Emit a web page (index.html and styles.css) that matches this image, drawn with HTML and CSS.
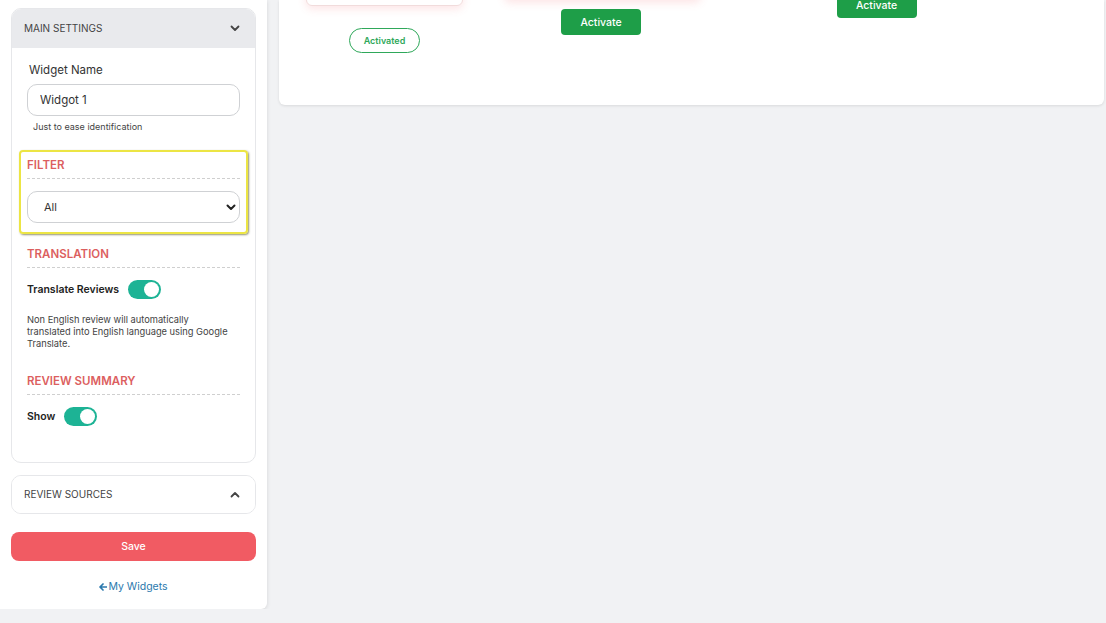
FILE: index.html
```html
<!DOCTYPE html>
<html lang="en">
<head>
    <meta charset="UTF-8">
    <meta name="viewport" content="width=device-width, initial-scale=1.0">
    <title>Widget Editor</title>
    <link rel="stylesheet" href="styles.css">
</head>
<body>
    <div class="layout">
        <aside class="sidebar">
            <div class="panel">
                <div class="panel-head">
                    <span>MAIN SETTINGS</span>
                    <svg class="chev" width="10" height="7" viewBox="0 0 10 7"><path d="M1.5 1.5 L5 5 L8.5 1.5" fill="none" stroke="#444" stroke-width="1.8" stroke-linecap="round" stroke-linejoin="round"/></svg>
                </div>
                <div class="panel-body">
                    <div class="form-group">
                        <label for="widget_name">Widget Name</label>
                        <input type="text" id="widget_name" value="Widgot 1">
                        <div class="hint">Just to ease identification</div>
                    </div>

                    <div class="section highlight">
                        <div class="section-title">FILTER</div>
                        <div class="select-box">
                            <span>All</span>
                            <svg width="10" height="7" viewBox="0 0 10 7"><path d="M1.5 1.5 L5 5 L8.5 1.5" fill="none" stroke="#222" stroke-width="2" stroke-linecap="round" stroke-linejoin="round"/></svg>
                        </div>
                    </div>

                    <div class="section">
                        <div class="section-title">TRANSLATION</div>
                        <div class="switch-row">
                            <span>Translate Reviews</span>
                            <span class="switch"></span>
                        </div>
                        <p class="note">Non English review will automatically translated into English language using Google Translate.</p>
                    </div>

                    <div class="section">
                        <div class="section-title">REVIEW SUMMARY</div>
                        <div class="switch-row">
                            <span>Show</span>
                            <span class="switch"></span>
                        </div>
                    </div>
                </div>
            </div>

            <div class="panel closed">
                <div class="panel-head">
                    <span>REVIEW SOURCES</span>
                    <svg class="chev" width="10" height="7" viewBox="0 0 10 7"><path d="M1.5 5.5 L5 2 L8.5 5.5" fill="none" stroke="#444" stroke-width="1.8" stroke-linecap="round" stroke-linejoin="round"/></svg>
                </div>
            </div>

            <button class="save">Save</button>
            <a class="back" href="#"><svg width="8" height="8" viewBox="0 0 8 8"><path d="M4 1 L1 4 L4 7 M1.3 4 H7.5" fill="none" stroke="#2c79ad" stroke-width="1.7" stroke-linecap="round" stroke-linejoin="round"/></svg>My Widgets</a>
        </aside>

        <main class="content">
            <div class="templates">
                <div class="template t1">
                    <div class="preview"></div>
                    <span class="activated">Activated</span>
                </div>
                <div class="template t2">
                    <div class="preview"></div>
                    <button class="activate">Activate</button>
                </div>
                <div class="template t3">
                    <div class="preview plain"></div>
                    <button class="activate">Activate</button>
                </div>
            </div>
        </main>
    </div>
</body>
</html>
```

FILE: styles.css
```css
body {
    margin: 0;
    font-family: 'Inter', 'Noto Sans', sans-serif;
    background-color: #f1f2f4;
    color: #222;
}
.layout {
    display: flex;
    align-items: flex-start;
    gap: 12px;
}
.sidebar {
    width: 267px;
    box-sizing: border-box;
    background-color: white;
    padding: 8px 11px 16px;
    border-radius: 0 0 6px 0;
    box-shadow: 0 1px 4px rgba(0, 0, 0, 0.12);
}
.panel {
    border: 1px solid #e6e7ea;
    border-radius: 10px;
    overflow: hidden;
}
.panel-head {
    display: flex;
    align-items: center;
    justify-content: space-between;
    height: 39px;
    padding: 0 13px 1px 12px;
    box-sizing: border-box;
    background-color: #e9eaed;
    font-size: 10px;
    color: #444;
}
.panel.closed {
    margin-top: 12px;
}
.panel.closed .panel-head {
    background-color: white;
    height: 37px;
}
.chev {
    margin-right: 2px;
}
.panel-body {
    padding: 14px 15px 36px;
}
.form-group label {
    display: block;
    font-size: 11.5px;
    color: #333;
    margin: 1px 0 7px 2px;
}
.form-group input {
    width: 100%;
    box-sizing: border-box;
    height: 32px;
    padding: 0 12px;
    border: 1px solid #cfd1d4;
    border-radius: 10px;
    font-family: inherit;
    font-size: 11.5px;
    color: #333;
}
.hint {
    font-size: 9px;
    color: #444;
    margin: 5px 0 0 6px;
}
.section {
    margin-top: 13px;
}
.section.highlight {
    margin: 18px -8px 0;
    padding: 6px 6px 9px;
    border: 2px solid #ece544;
    border-radius: 4px;
    box-shadow: 1px 1px 2px rgba(60, 60, 0, 0.55);
}
.section-title {
    font-size: 11.5px;
    font-weight: 600;
    color: #dc5f5f;
    padding-bottom: 6px;
    border-bottom: 1px dashed #cfcfcf;
}
.select-box {
    display: flex;
    align-items: center;
    justify-content: space-between;
    height: 32px;
    box-sizing: border-box;
    margin-top: 12px;
    padding: 0 2px 0 16px;
    border: 1px solid #cfd1d4;
    border-radius: 10px;
    font-size: 11px;
    color: #333;
}
.select-box svg {
    margin-right: 1px;
}
.switch-row {
    display: flex;
    align-items: center;
    gap: 9px;
    margin-top: 12px;
    font-size: 10.5px;
    font-weight: 600;
    color: #222;
}
.switch {
    position: relative;
    width: 33px;
    height: 19px;
    border-radius: 10px;
    background-color: #1db395;
}
.switch::after {
    content: '';
    position: absolute;
    right: 2px;
    top: 2px;
    width: 15px;
    height: 15px;
    border-radius: 50%;
    background-color: white;
}
.note {
    margin: 15px 0 24px;
    padding-right: 8px;
    font-size: 9.3px;
    line-height: 12px;
    color: #444;
}
.save {
    display: block;
    width: 100%;
    height: 29px;
    margin-top: 18px;
    border: none;
    border-radius: 8px;
    background-color: #f15b63;
    color: white;
    font-family: inherit;
    font-size: 10.5px;
    font-weight: 500;
}
.back {
    display: flex;
    align-items: center;
    justify-content: center;
    gap: 1px;
    margin-top: 19px;
    font-size: 10.5px;
    color: #2c79ad;
    text-decoration: none;
}
.content {
    flex: 1;
    height: 105px;
    background-color: white;
    border-radius: 0 0 6px 6px;
    box-shadow: 0 1px 3px rgba(0, 0, 0, 0.1);
    overflow: hidden;
    margin-right: 2px;
}
.templates {
    display: grid;
    grid-template-columns: 155px 195px 195px;
    column-gap: 43px;
    padding-left: 28px;
    margin-top: -60px;
}
.template {
    display: flex;
    flex-direction: column;
    align-items: center;
}
.template.t3 {
    margin-left: 72px;
}
.preview {
    width: 100%;
    background-color: white;
    border: 1px solid #f1dcdc;
    border-radius: 6px;
    box-shadow: 0 3px 9px rgba(241, 91, 99, 0.16);
}
.t1 .preview {
    height: 64px;
}
.t2 .preview {
    height: 58px;
    border-color: transparent;
}
.t3 .preview {
    height: 40px;
    border: none;
    box-shadow: none;
}
.activated {
    margin-top: 22px;
    padding: 0 14px;
    height: 25px;
    line-height: 23px;
    box-sizing: border-box;
    border: 1px solid #2fa85a;
    border-radius: 13px;
    font-size: 9px;
    font-weight: 600;
    color: #2fa85a;
}
.activate {
    margin-top: 9px;
    width: 80px;
    height: 26px;
    border: none;
    border-radius: 4px;
    background-color: #1e9e48;
    color: white;
    font-family: inherit;
    font-size: 10.5px;
    font-weight: 500;
}
.t2 .activate {
    margin-left: -3px;
}
.t3 .activate {
    margin-top: 12px;
}
```
